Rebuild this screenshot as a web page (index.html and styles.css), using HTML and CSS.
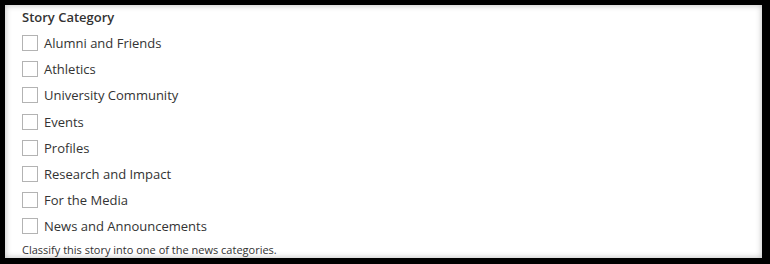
FILE: index.html
```html
<!DOCTYPE html>
<html lang="en">
<head>
<meta charset="utf-8">
<title>Story Category</title>
<link rel="stylesheet" href="styles.css">
</head>
<body>
<div class="frame">
  <fieldset class="field">
    <legend class="field-label">Story Category</legend>
    <ul class="options">
      <li class="option"><span class="box"></span><span class="option-label">Alumni and Friends</span></li>
      <li class="option"><span class="box"></span><span class="option-label">Athletics</span></li>
      <li class="option"><span class="box"></span><span class="option-label">University Community</span></li>
      <li class="option"><span class="box"></span><span class="option-label">Events</span></li>
      <li class="option"><span class="box"></span><span class="option-label">Profiles</span></li>
      <li class="option"><span class="box"></span><span class="option-label">Research and Impact</span></li>
      <li class="option"><span class="box"></span><span class="option-label">For the Media</span></li>
      <li class="option"><span class="box"></span><span class="option-label">News and Announcements</span></li>
    </ul>
    <p class="help">Classify this story into one of the news categories.</p>
  </fieldset>
</div>
</body>
</html>
```

FILE: styles.css
```css
html, body {
  margin: 0;
  padding: 0;
  background: #000;
  height: 100%;
  overflow: hidden;
}
body {
  padding: 5px 8px 6px 5px;
  box-sizing: border-box;
  font-family: "Open Sans", "Liberation Sans", sans-serif;
  color: #333;
}
.frame {
  background: #fff;
  height: 100%;
  box-shadow: inset 0 0 6px rgba(0, 0, 0, 0.28);
  padding: 0 0 0 17px;
  box-sizing: border-box;
}
.field {
  border: 0;
  margin: 0;
  padding: 0;
}
.field-label {
  padding: 0;
  font-size: 13px;
  font-weight: 600;
  line-height: 24px;
  color: #333;
}
.options {
  list-style: none;
  margin: 0;
  padding: 0;
  display: flex;
  flex-direction: column;
  gap: 10.2px;
  margin-top: 6px;
}
.option {
  display: flex;
  align-items: center;
  gap: 6px;
  height: 16px;
}
.box {
  width: 16px;
  height: 16px;
  box-sizing: border-box;
  border: 1px solid #b3b3b3;
  background: #fff;
  flex: none;
}
.option-label {
  font-size: 13px;
  line-height: 16px;
  color: #333;
}
.help {
  margin: 9px 0 0;
  font-size: 11px;
  line-height: 14px;
  color: #333;
}
```
